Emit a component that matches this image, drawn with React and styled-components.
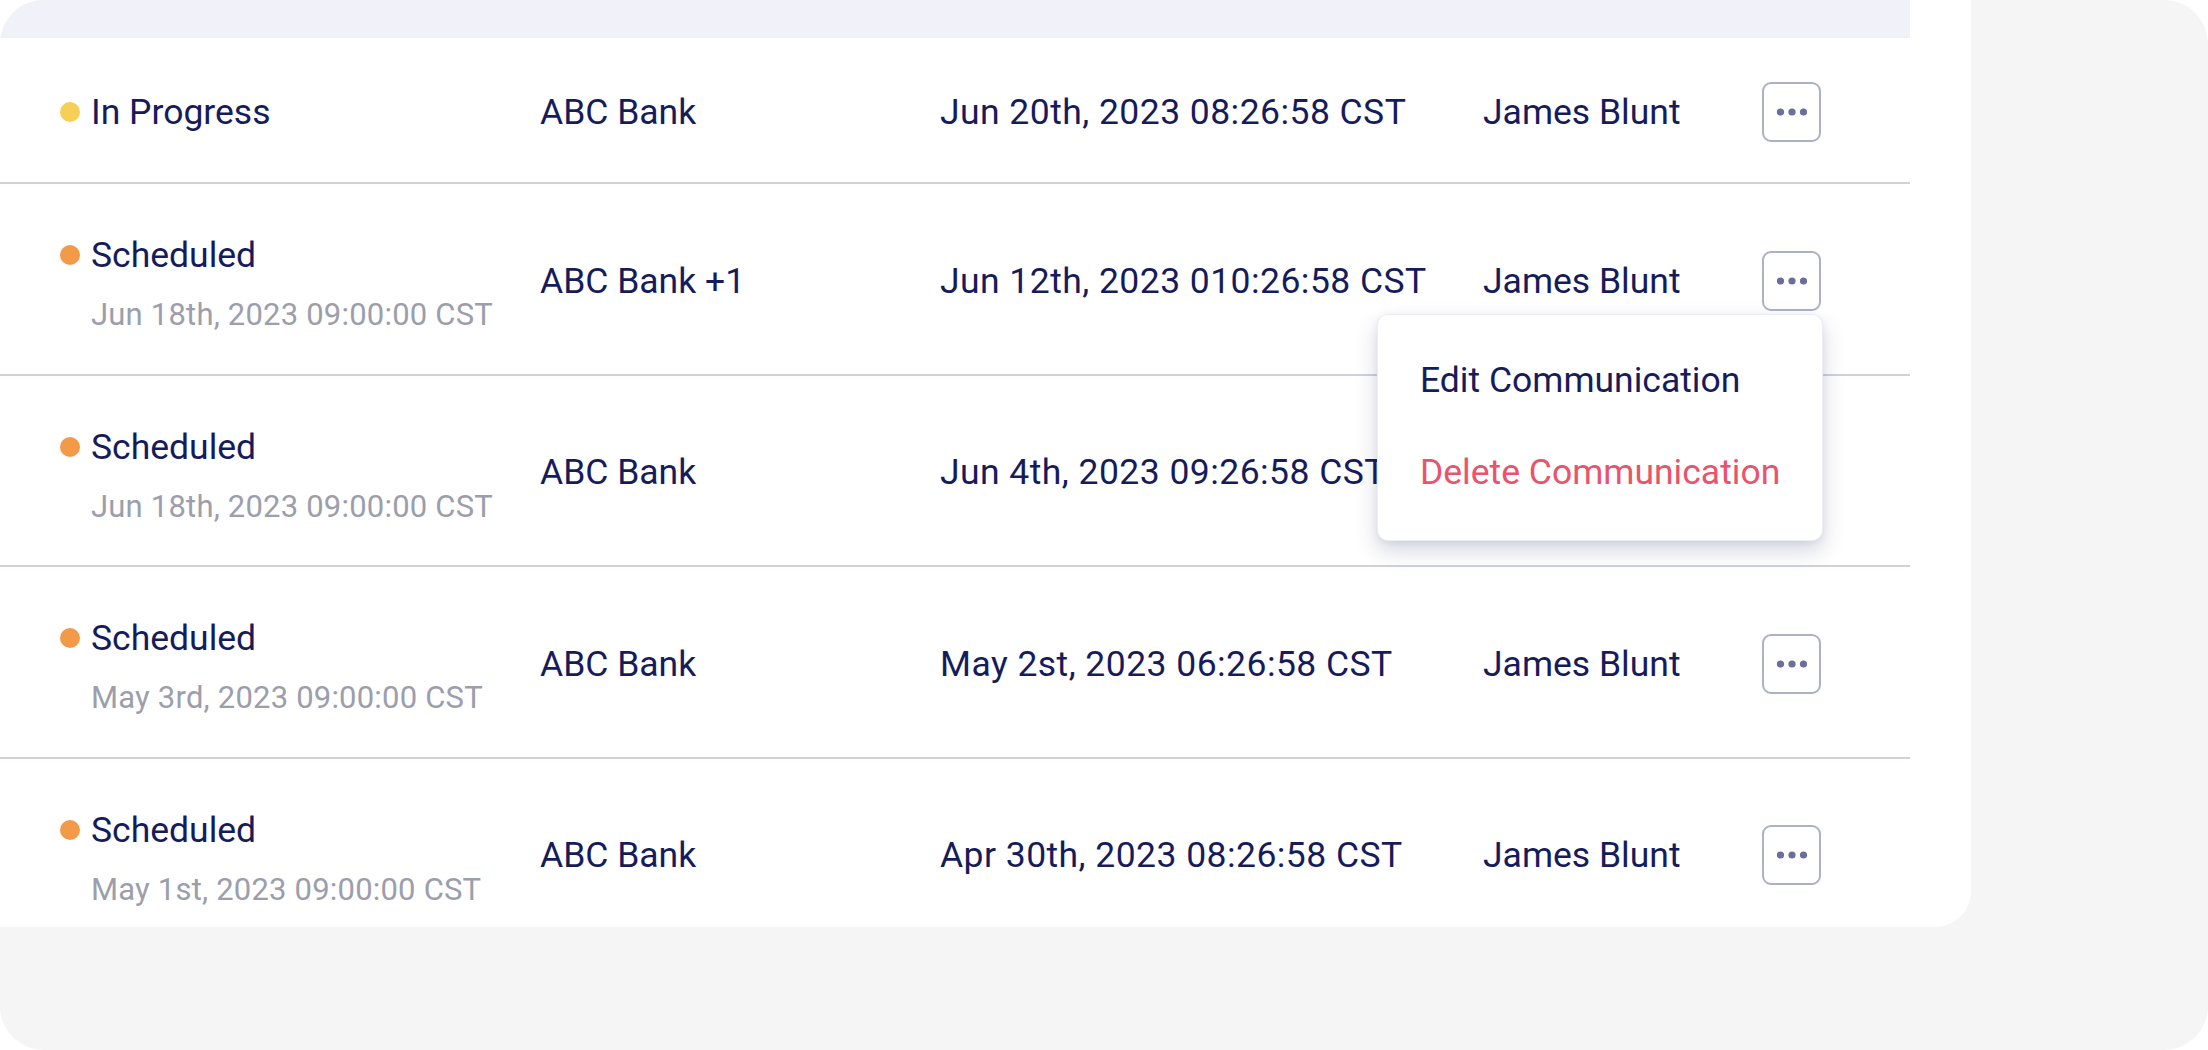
import React from "react";
import styled, { createGlobalStyle } from "styled-components";

const GlobalStyle = createGlobalStyle`
  html, body {
    margin: 0;
    padding: 0;
    background: #ffffff;
  }
  body {
    font-family: Roboto, "Liberation Sans", Arial, sans-serif;
  }
  * {
    box-sizing: border-box;
  }
`;

const Frame = styled.div`
  width: 2208px;
  height: 1050px;
  background: #f5f5f5;
  border-radius: 44px;
  overflow: hidden;
  position: relative;
`;

const Card = styled.div`
  margin-left: -318px;
  width: 2289px;
  height: 927px;
  padding-right: 61px;
  background: #ffffff;
  border-bottom-right-radius: 36px;
  overflow: hidden;
`;

const HeaderBand = styled.div`
  height: 38px;
  background: #f0f1f9;
`;

const Row = styled.div`
  display: grid;
  grid-template-columns: 318px 540px 400px 543px 279px 148px;
  align-items: center;
  height: ${({ $short }) => ($short ? 146 : 191.5)}px;
  padding-top: 4px;
  border-bottom: 2px solid #cfd1df;
  color: #161c5b;
  font-size: 35.5px;
  line-height: 44px;
`;

const Subject = styled.div`
  text-align: right;
  white-space: nowrap;
  overflow: hidden;
  margin-right: -4px;
`;

const StatusCell = styled.div`
  display: flex;
  flex-direction: column;
  padding-left: 60px;
  padding-top: ${({ $withSub }) => ($withSub ? 9 : 0)}px;
`;

const StatusLine = styled.div`
  display: flex;
  align-items: center;
  gap: 11px;
`;

const Dot = styled.span`
  width: 20px;
  height: 20px;
  border-radius: 50%;
  background: ${({ $color }) => $color};
  flex-shrink: 0;
`;

const SubText = styled.div`
  margin-top: 16px;
  margin-left: 31px;
  color: #9c9eab;
  font-size: 31px;
  line-height: 44px;
  letter-spacing: 0.2px;
  white-space: nowrap;
`;

const Cell = styled.div`
  white-space: nowrap;
  letter-spacing: ${({ $wide }) => ($wide ? "0.45px" : "0")};
`;

const ActionCell = styled.div`
  position: relative;
  width: 59px;
`;

const MoreButton = styled.button`
  width: 59px;
  height: 60px;
  padding: 0;
  border: 2px solid #aeb0c6;
  border-radius: 9px;
  background: #ffffff;
  display: flex;
  align-items: center;
  justify-content: center;
  cursor: pointer;
`;

const Menu = styled.div`
  position: absolute;
  top: calc(100% + 3px);
  right: -2px;
  width: 446px;
  padding: 19px 0 22px;
  background: #ffffff;
  border-radius: 11px;
  border: 1px solid #eceef4;
  box-shadow: 0 10px 22px rgba(48, 54, 100, 0.2), 0 2px 6px rgba(48, 54, 100, 0.08);
  z-index: 10;
`;

const MenuItem = styled.div`
  padding: 24px 42px;
  font-size: 35.5px;
  line-height: 44px;
  white-space: nowrap;
  color: ${({ $danger }) => ($danger ? "#e9536c" : "#161c5b")};
`;

const rows = [
  {
    status: "In Progress",
    color: "#f6cf57",
    bank: "ABC Bank",
    date: "Jun 20th, 2023 08:26:58 CST",
    owner: "James Blunt",
  },
  {
    status: "Scheduled",
    color: "#f29a48",
    sub: "Jun 18th, 2023 09:00:00 CST",
    bank: "ABC Bank +1",
    date: "Jun 12th, 2023 010:26:58 CST",
    owner: "James Blunt",
    open: true,
  },
  {
    status: "Scheduled",
    color: "#f29a48",
    sub: "Jun 18th, 2023 09:00:00 CST",
    bank: "ABC Bank",
    date: "Jun 4th, 2023 09:26:58 CST",
    owner: "James Blunt",
  },
  {
    status: "Scheduled",
    color: "#f29a48",
    sub: "May 3rd, 2023 09:00:00 CST",
    bank: "ABC Bank",
    date: "May 2st, 2023 06:26:58 CST",
    owner: "James Blunt",
  },
  {
    subject: "Quarterly statement reminder.",
    status: "Scheduled",
    color: "#f29a48",
    sub: "May 1st, 2023 09:00:00 CST",
    bank: "ABC Bank",
    date: "Apr 30th, 2023 08:26:58 CST",
    owner: "James Blunt",
  },
];

function DotsIcon() {
  return (
    <svg width="32" height="10" viewBox="0 0 32 10">
      <circle cx="4.5" cy="5" r="3.6" fill="#6b6f98" />
      <circle cx="16" cy="5" r="3.6" fill="#6b6f98" />
      <circle cx="27.5" cy="5" r="3.6" fill="#6b6f98" />
    </svg>
  );
}

export default function App() {
  return (
    <>
      <GlobalStyle />
      <Frame>
        <Card>
          <HeaderBand />
          {rows.map((row, i) => (
            <Row key={i} $short={!row.sub}>
              <Subject>{row.subject || ""}</Subject>
              <StatusCell $withSub={!!row.sub}>
                <StatusLine>
                  <Dot $color={row.color} />
                  <span>{row.status}</span>
                </StatusLine>
                {row.sub && <SubText>{row.sub}</SubText>}
              </StatusCell>
              <Cell>{row.bank}</Cell>
              <Cell $wide>{row.date}</Cell>
              <Cell>{row.owner}</Cell>
              <ActionCell>
                <MoreButton aria-label="More actions">
                  <DotsIcon />
                </MoreButton>
                {row.open && (
                  <Menu>
                    <MenuItem>Edit Communication</MenuItem>
                    <MenuItem $danger>Delete Communication</MenuItem>
                  </Menu>
                )}
              </ActionCell>
            </Row>
          ))}
        </Card>
      </Frame>
    </>
  );
}
